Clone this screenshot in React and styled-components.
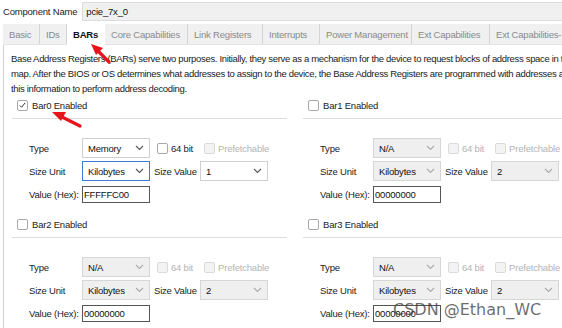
import React from 'react'
import styled, { createGlobalStyle } from 'styled-components'

const GlobalStyle = createGlobalStyle`
    body {
        margin: 0;
        background: #fff;
        font-family: "Liberation Sans", Arial, sans-serif;
        font-size: 9.5px;
        letter-spacing: -0.2px;
        color: #222;
        overflow: hidden;
    }
`

const tabs = [
    { name: 'Basic', w: 37 },
    { name: 'IDs', w: 27 },
    { name: 'BARs', w: 38, active: true },
    { name: 'Core Capabilities', w: 83 },
    { name: 'Link Registers', w: 75 },
    { name: 'Interrupts', w: 57 },
    { name: 'Power Management', w: 92 },
    { name: 'Ext Capabilities', w: 78 },
    { name: 'Ext Capabilities-', w: 90 },
]

const descLines = [
    'Base Address Registers (BARs) serve two purposes. Initially, they serve as a mechanism for the device to request blocks of address space in the system memory',
    'map. After the BIOS or OS determines what addresses to assign to the device, the Base Address Registers are programmed with addresses and the device uses',
    'this information to perform address decoding.',
]

const bars = [
    { id: 0, enabled: true, type: 'Memory', unit: 'Kilobytes', size: '1', hex: 'FFFFFC00' },
    { id: 1, type: 'N/A', unit: 'Kilobytes', size: '2', hex: '00000000' },
    { id: 2, type: 'N/A', unit: 'Kilobytes', size: '2', hex: '00000000' },
    { id: 3, type: 'N/A', unit: 'Kilobytes', size: '2', hex: '00000000' },
]

function Chevron() {
    return (
        <svg width="9" height="6" viewBox="0 0 9 6">
            <path d="M1 1 L4.5 4.5 L8 1" fill="none" stroke="#666" strokeWidth="1.1" />
        </svg>
    )
}

function Check({ checked, disabled }) {
    return (
        <Box disabled={disabled}>
            {checked && (
                <svg width="10" height="10" viewBox="0 0 10 10">
                    <path d="M2 5.5 L4 7.5 L8 2.5" fill="none" stroke="#333" strokeWidth="1.1" />
                </svg>
            )}
        </Box>
    )
}

function Bar({ bar }) {
    const on = !!bar.enabled
    return (
        <Block>
            <BarHeader>
                <Check checked={on} />
                <span>Bar{bar.id} Enabled</span>
            </BarHeader>
            <Separator />
            <Fields>
                <Row>
                    <Label>Type</Label>
                    <Select disabled={!on}>
                        <span>{bar.type}</span>
                        <Chevron />
                    </Select>
                    <Opt disabled={!on}>
                        <Check disabled={!on} />
                        <span>64 bit</span>
                    </Opt>
                    <Opt disabled>
                        <Check disabled />
                        <span>Prefetchable</span>
                    </Opt>
                </Row>
                <Row>
                    <Label>Size Unit</Label>
                    <Select disabled={!on} focused={on}>
                        <span>{bar.unit}</span>
                        <Chevron />
                    </Select>
                    <SizeLabel>Size Value</SizeLabel>
                    <Select disabled={!on}>
                        <span>{bar.size}</span>
                        <Chevron />
                    </Select>
                </Row>
                <Row>
                    <Label>Value (Hex):</Label>
                    <HexInput>{bar.hex}</HexInput>
                </Row>
            </Fields>
        </Block>
    )
}

function App() {
    return (
        <Page>
            <GlobalStyle />
            <NameRow>
                <span>Component Name</span>
                <NameInput>pcie_7x_0</NameInput>
            </NameRow>
            <TabBar>
                {tabs.map(t => (
                    <Tab key={t.name} active={t.active} style={{ width: t.w }}>{t.name}</Tab>
                ))}
            </TabBar>
            <Panel>
                <Desc>
                    {descLines.map(l => <DescLine key={l}>{l}</DescLine>)}
                </Desc>
                <BarGrid>
                    {bars.map(b => <Bar key={b.id} bar={b} />)}
                </BarGrid>
            </Panel>
            <Arrows width="562" height="328">
                <path d="M109 62 L97 50" stroke="#e8141b" strokeWidth="3.2" strokeLinecap="round" />
                <polygon points="91,44 103,48 96,55" fill="#e8141b" />
                <path d="M80 126 L62 117" stroke="#e8141b" strokeWidth="3.2" strokeLinecap="round" />
                <polygon points="52,112 66,112 61,121" fill="#e8141b" />
            </Arrows>
            <Watermark>CSDN @Ethan_WC</Watermark>
        </Page>
    )
}

const Page = styled.div`
    position: relative;
    width: 562px;
    height: 328px;
    overflow: hidden;
`

const NameRow = styled.div`
    display: flex;
    align-items: center;
    gap: 4px;
    height: 19px;
    padding: 2px 0 0 3px;
    white-space: nowrap;
`

const NameInput = styled.div`
    flex: 1;
    height: 17px;
    display: flex;
    align-items: center;
    padding-left: 3px;
    margin-left: 1px;
    background: #f0f0f0;
    border: 1px solid #dcdcdc;
    border-right: none;
    color: #111;
`

const TabBar = styled.div`
    display: flex;
    height: 20px;
    margin: 3px 0 0 3px;
    background: #f0f0f0;
    border-bottom: 1px solid #e4e4e4;
`

const Tab = styled.div`
    flex: none;
    display: flex;
    align-items: center;
    padding-left: 6px;
    box-sizing: border-box;
    white-space: nowrap;
    overflow: hidden;
    border-right: 1px solid ${p => p.active ? 'transparent' : '#d4d4d4'};
    background: ${p => p.active ? '#fff' : 'transparent'};
    color: ${p => p.active ? '#111' : '#8a8a8a'};
    font-weight: ${p => p.active ? 700 : 400};
    height: ${p => p.active ? '21px' : '20px'};
`

const Panel = styled.div`
    margin-left: 3px;
    border-left: 1px solid #d0d0d0;
    padding: 6px 0 0 7px;
    height: 300px;
`

const Desc = styled.div`
    line-height: 15px;
    letter-spacing: -0.33px;
`

const DescLine = styled.div`
    white-space: nowrap;
`

const BarGrid = styled.div`
    display: grid;
    grid-template-columns: 275px 1fr;
    column-gap: 16px;
    margin-top: 1px;
    margin-left: 1px;
`

const Block = styled.div`
    display: flex;
    flex-direction: column;
    margin-bottom: 12px;
`

const BarHeader = styled.div`
    display: flex;
    align-items: center;
    gap: 4px;
    height: 16px;
    padding-left: 5px;
    color: #222;
    white-space: nowrap;
`

const Separator = styled.div`
    margin-top: 5px;
    border-top: 1px solid #dedede;
`

const Fields = styled.div`
    display: flex;
    flex-direction: column;
    gap: 3px;
    margin-top: 19px;
    padding-left: 17px;
`

const Row = styled.div`
    display: flex;
    align-items: center;
    min-height: 20px;
    white-space: nowrap;
`

const Label = styled.span`
    width: 53px;
    flex: none;
`

const Select = styled.div`
    width: 68px;
    height: 20px;
    flex: none;
    box-sizing: border-box;
    display: flex;
    align-items: center;
    justify-content: space-between;
    padding: 0 5px 0 5px;
    background: ${p => p.disabled ? '#efefef' : '#fff'};
    border: 1px solid ${p => p.focused ? '#3d7ad6' : p.disabled ? '#d6d6d6' : '#cfcfcf'};
    color: #111;
    svg path { stroke: ${p => p.disabled ? '#aaa' : '#555'}; }
`

const Opt = styled.div`
    display: flex;
    align-items: center;
    gap: 3px;
    margin-left: 7px;
    color: ${p => p.disabled ? '#b4b4b4' : '#222'};
    & + & { margin-left: 11px; }
`

const SizeLabel = styled.span`
    margin: 0 4px 0 4px;
    width: 42px;
`

const Box = styled.div`
    width: 11px;
    height: 11px;
    box-sizing: border-box;
    border: 1px solid ${p => p.disabled ? '#dadada' : '#a8a8a8'};
    background: ${p => p.disabled ? '#f3f3f3' : '#fff'};
    border-radius: 2px;
    display: flex;
    align-items: center;
    justify-content: center;
    flex: none;
`

const HexInput = styled.div`
    width: 68px;
    height: 17px;
    flex: none;
    box-sizing: border-box;
    border: 1px solid #555;
    display: flex;
    align-items: center;
    padding-left: 1px;
    color: #111;
`

const Arrows = styled.svg`
    position: absolute;
    left: 0;
    top: 0;
    pointer-events: none;
`

const Watermark = styled.div`
    position: absolute;
    left: 393px;
    top: 300px;
    font-family: "DejaVu Sans", sans-serif;
    font-size: 16px;
    letter-spacing: 0;
    color: rgba(60, 60, 60, 0.75);
    white-space: nowrap;
`

export default App
